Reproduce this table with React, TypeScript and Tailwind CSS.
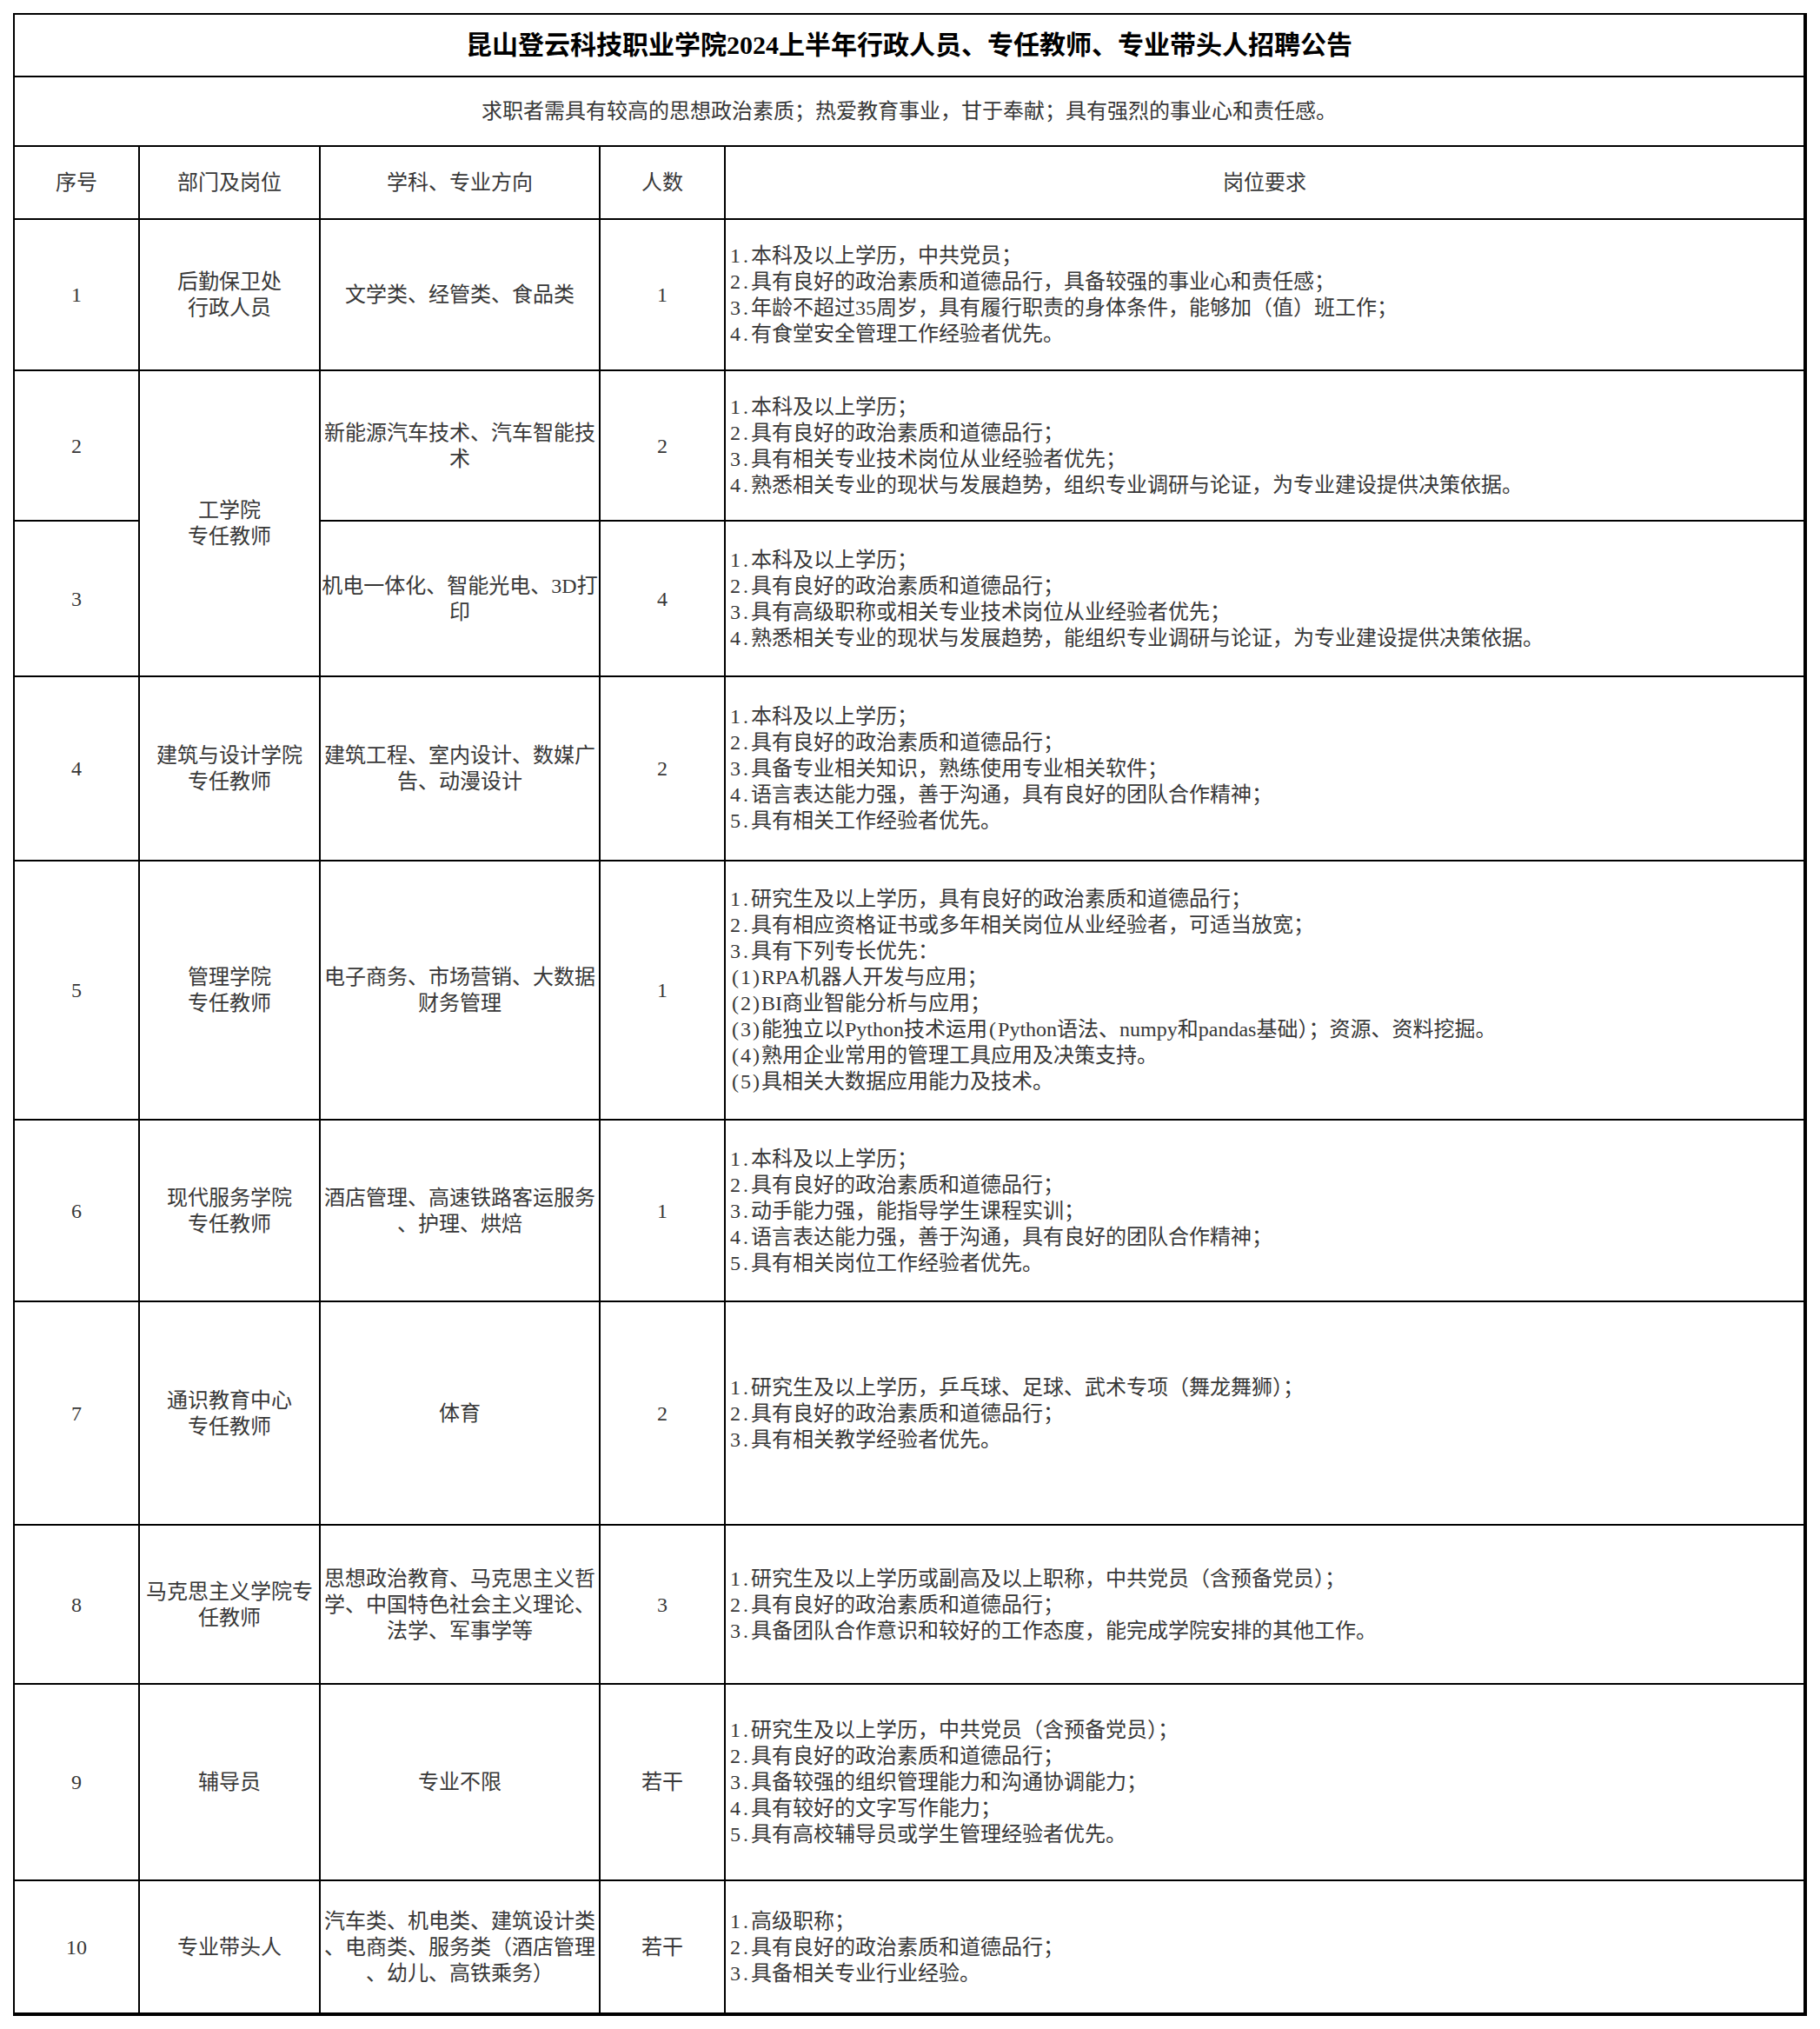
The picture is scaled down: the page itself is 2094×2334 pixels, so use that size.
import React from "react";

type Row = {
  no: string;
  dept?: string[];
  major: string[];
  count: string;
  reqs: string[];
};

const rows: Row[] = [
  {
    no: "1",
    dept: ["后勤保卫处", "行政人员"],
    major: ["文学类、经管类、食品类"],
    count: "1",
    reqs: [
      "1.本科及以上学历，中共党员；",
      "2.具有良好的政治素质和道德品行，具备较强的事业心和责任感；",
      "3.年龄不超过35周岁，具有履行职责的身体条件，能够加（值）班工作；",
      "4.有食堂安全管理工作经验者优先。",
    ],
  },
  {
    no: "2",
    dept: ["工学院", "专任教师"],
    major: ["新能源汽车技术、汽车智能技", "术"],
    count: "2",
    reqs: [
      "1.本科及以上学历；",
      "2.具有良好的政治素质和道德品行；",
      "3.具有相关专业技术岗位从业经验者优先；",
      "4.熟悉相关专业的现状与发展趋势，组织专业调研与论证，为专业建设提供决策依据。",
    ],
  },
  {
    no: "3",
    major: ["机电一体化、智能光电、3D打", "印"],
    count: "4",
    reqs: [
      "1.本科及以上学历；",
      "2.具有良好的政治素质和道德品行；",
      "3.具有高级职称或相关专业技术岗位从业经验者优先；",
      "4.熟悉相关专业的现状与发展趋势，能组织专业调研与论证，为专业建设提供决策依据。",
    ],
  },
  {
    no: "4",
    dept: ["建筑与设计学院", "专任教师"],
    major: ["建筑工程、室内设计、数媒广", "告、动漫设计"],
    count: "2",
    reqs: [
      "1.本科及以上学历；",
      "2.具有良好的政治素质和道德品行；",
      "3.具备专业相关知识，熟练使用专业相关软件；",
      "4.语言表达能力强，善于沟通，具有良好的团队合作精神；",
      "5.具有相关工作经验者优先。",
    ],
  },
  {
    no: "5",
    dept: ["管理学院", "专任教师"],
    major: ["电子商务、市场营销、大数据", "财务管理"],
    count: "1",
    reqs: [
      "1.研究生及以上学历，具有良好的政治素质和道德品行；",
      "2.具有相应资格证书或多年相关岗位从业经验者，可适当放宽；",
      "3.具有下列专长优先：",
      "(1)RPA机器人开发与应用；",
      "(2)BI商业智能分析与应用；",
      "(3)能独立以Python技术运用(Python语法、numpy和pandas基础）；资源、资料挖掘。",
      "(4)熟用企业常用的管理工具应用及决策支持。",
      "(5)具相关大数据应用能力及技术。",
    ],
  },
  {
    no: "6",
    dept: ["现代服务学院", "专任教师"],
    major: ["酒店管理、高速铁路客运服务", "、护理、烘焙"],
    count: "1",
    reqs: [
      "1.本科及以上学历；",
      "2.具有良好的政治素质和道德品行；",
      "3.动手能力强，能指导学生课程实训；",
      "4.语言表达能力强，善于沟通，具有良好的团队合作精神；",
      "5.具有相关岗位工作经验者优先。",
    ],
  },
  {
    no: "7",
    dept: ["通识教育中心", "专任教师"],
    major: ["体育"],
    count: "2",
    reqs: [
      "1.研究生及以上学历，乒乓球、足球、武术专项（舞龙舞狮）；",
      "2.具有良好的政治素质和道德品行；",
      "3.具有相关教学经验者优先。",
    ],
  },
  {
    no: "8",
    dept: ["马克思主义学院专", "任教师"],
    major: ["思想政治教育、马克思主义哲", "学、中国特色社会主义理论、", "法学、军事学等"],
    count: "3",
    reqs: [
      "1.研究生及以上学历或副高及以上职称，中共党员（含预备党员）；",
      "2.具有良好的政治素质和道德品行；",
      "3.具备团队合作意识和较好的工作态度，能完成学院安排的其他工作。",
    ],
  },
  {
    no: "9",
    dept: ["辅导员"],
    major: ["专业不限"],
    count: "若干",
    reqs: [
      "1.研究生及以上学历，中共党员（含预备党员）；",
      "2.具有良好的政治素质和道德品行；",
      "3.具备较强的组织管理能力和沟通协调能力；",
      "4.具有较好的文字写作能力；",
      "5.具有高校辅导员或学生管理经验者优先。",
    ],
  },
  {
    no: "10",
    dept: ["专业带头人"],
    major: ["汽车类、机电类、建筑设计类", "、电商类、服务类（酒店管理", "、幼儿、高铁乘务）"],
    count: "若干",
    reqs: ["1.高级职称；", "2.具有良好的政治素质和道德品行；", "3.具备相关专业行业经验。"],
  },
];

// Song-style fonts give digits and punctuation a half-em advance; letters keep their own width.
function T({ text }: { text: string }) {
  return (
    <>
      {Array.from(text).map((c, i) =>
        /[0-9.()]/.test(c) ? (
          <span key={i} className="inline-block w-[0.5em] text-center">
            {c}
          </span>
        ) : (
          <React.Fragment key={i}>{c}</React.Fragment>
        )
      )}
    </>
  );
}

function Lines({ lines }: { lines: string[] }) {
  return (
    <>
      {lines.map((l, i) => (
        <span key={i} className="whitespace-nowrap">
          <T text={l} />
        </span>
      ))}
    </>
  );
}

const head = "flex items-center justify-center border-r-2 border-b-2 border-black";

export default function App() {
  return (
    <div className="w-[2094px] min-h-[2334px] bg-white pt-[15px] pl-[15px] font-['Liberation_Serif','Noto_Sans_CJK_SC',serif] text-[24px] leading-[30px] text-[#383838]">
      <div className="grid w-[2064px] grid-cols-[144px_208px_322px_144px_1244px] grid-rows-[72px_80px_84px_174px_173px_179px_212px_298px_209px_257px_183px_226px_155px] border-t-2 border-l-2 border-black">
        <div className="col-span-5 flex items-center justify-center border-r-4 border-b-2 border-black text-[30px] font-bold text-black">
          <T text="昆山登云科技职业学院2024上半年行政人员、专任教师、专业带头人招聘公告" />
        </div>
        <div className="col-span-5 flex items-center justify-center border-r-4 border-b-2 border-black">
          求职者需具有较高的思想政治素质；热爱教育事业，甘于奉献；具有强烈的事业心和责任感。
        </div>

        <div className={head}>序号</div>
        <div className={head}>部门及岗位</div>
        <div className={head}>学科、专业方向</div>
        <div className={head}>人数</div>
        <div className="flex items-center justify-center border-r-4 border-b-2 border-black">岗位要求</div>

        {rows.map((r, idx) => {
          const bottom = idx === rows.length - 1 ? "border-b-4" : "border-b-2";
          return (
            <React.Fragment key={r.no}>
              <div className={`flex items-center justify-center border-r-2 ${bottom} border-black`}>
                <T text={r.no} />
              </div>
              {r.dept && (
                <div
                  className={`flex flex-col items-center justify-center text-center border-r-2 ${bottom} border-black ${
                    r.no === "2" ? "row-span-2" : ""
                  }`}
                >
                  <Lines lines={r.dept} />
                </div>
              )}
              <div className={`flex flex-col items-center justify-center text-center border-r-2 ${bottom} border-black`}>
                <Lines lines={r.major} />
              </div>
              <div className={`flex items-center justify-center border-r-2 ${bottom} border-black`}>
                <T text={r.count} />
              </div>
              <div className={`flex flex-col justify-center pl-[5px] border-r-4 ${bottom} border-black`}>
                <Lines lines={r.reqs} />
              </div>
            </React.Fragment>
          );
        })}
      </div>
    </div>
  );
}
